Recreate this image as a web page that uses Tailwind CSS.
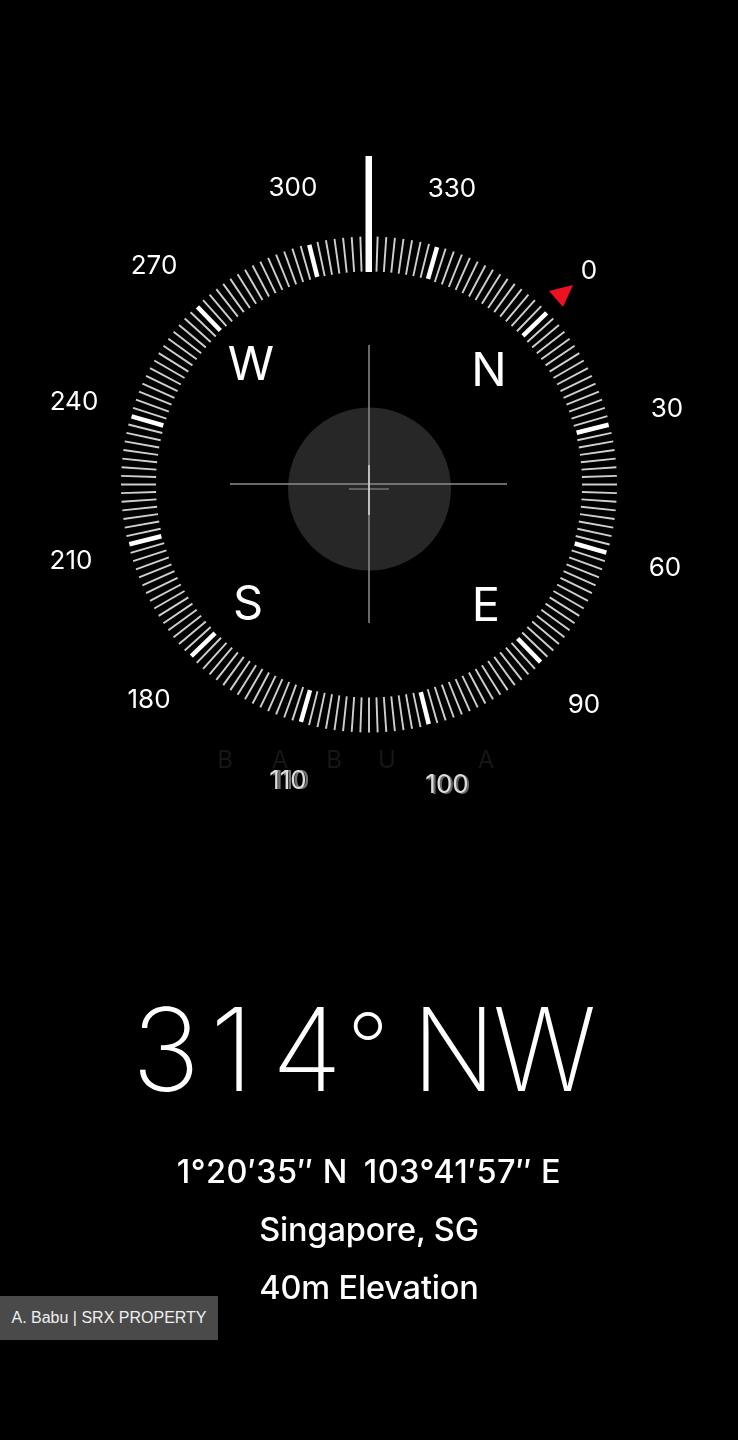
<!DOCTYPE html>
<html lang="en">
<head>
  <meta charset="UTF-8">
  <meta name="viewport" content="width=device-width, initial-scale=1.0">
  <title>Compass</title>
  <script src="https://cdn.jsdelivr.net/npm/@tailwindcss/browser@4"></script>
</head>
<body class="bg-black text-white font-['Inter',sans-serif]">
  <main class="relative w-[738px] h-[1440px] overflow-hidden bg-black">

    <!-- Compass dial -->
    <section class="relative h-[960px] blur-[0.4px]">
      <svg id="dial" class="absolute inset-0" width="738" height="960" viewBox="0 0 738 960">
        <circle cx="369.5" cy="489" r="81.5" fill="#272727"></circle>
        <g id="ticks"></g>
        <rect x="365.5" y="156" width="6.5" height="116" fill="#fff"></rect>
        <line x1="230" y1="484" x2="507" y2="484" stroke="#8c8c8c" stroke-width="1.5"></line>
        <line x1="369" y1="345" x2="369" y2="623" stroke="#8c8c8c" stroke-width="1.5"></line>
        <line x1="349" y1="489" x2="389" y2="489" stroke="#9a9a9a" stroke-width="1.2"></line>
        <line x1="369" y1="465" x2="369" y2="515" stroke="#d8d8d8" stroke-width="1.5"></line>
        <polygon points="549,291 573,285 563,307" fill="#ee1122"></polygon>
      </svg>

      <!-- Degree labels -->
      <span class="absolute left-[293px] top-[187px] -translate-x-1/2 -translate-y-1/2 text-[26px] leading-none">300</span>
      <span class="absolute left-[452px] top-[188px] -translate-x-1/2 -translate-y-1/2 text-[26px] leading-none">330</span>
      <span class="absolute left-[589px] top-[270px] -translate-x-1/2 -translate-y-1/2 text-[26px] leading-none">0</span>
      <span class="absolute left-[667px] top-[408px] -translate-x-1/2 -translate-y-1/2 text-[26px] leading-none">30</span>
      <span class="absolute left-[665px] top-[567px] -translate-x-1/2 -translate-y-1/2 text-[26px] leading-none">60</span>
      <span class="absolute left-[584px] top-[704px] -translate-x-1/2 -translate-y-1/2 text-[26px] leading-none">90</span>
      <span class="absolute left-[149px] top-[699px] -translate-x-1/2 -translate-y-1/2 text-[26px] leading-none">180</span>
      <span class="absolute left-[71px] top-[560px] -translate-x-1/2 -translate-y-1/2 text-[26px] leading-none">210</span>
      <span class="absolute left-[74px] top-[401px] -translate-x-1/2 -translate-y-1/2 text-[26px] leading-none">240</span>
      <span class="absolute left-[154px] top-[265px] -translate-x-1/2 -translate-y-1/2 text-[26px] leading-none">270</span>

      <!-- Ghosted labels at the bottom of the dial -->
      <span class="absolute left-[288px] top-[780px] -translate-x-1/2 -translate-y-1/2 text-[26px] leading-[20px] text-[#dcdcdc] blur-[0.5px] [text-shadow:3px_0_0_rgba(255,255,255,0.45)]">110</span>
      <span class="absolute left-[447px] top-[784px] -translate-x-1/2 -translate-y-1/2 text-[26px] leading-[20px] text-[#dcdcdc] blur-[0.5px] [text-shadow:2px_1px_0_rgba(255,255,255,0.4)]">100</span>

      <!-- Cardinal points -->
      <span class="absolute left-[251px] top-[362px] -translate-x-1/2 -translate-y-1/2 text-[47px] leading-none">W</span>
      <span class="absolute left-[489px] top-[368px] -translate-x-1/2 -translate-y-1/2 text-[47px] leading-none">N</span>
      <span class="absolute left-[248px] top-[601px] -translate-x-1/2 -translate-y-1/2 text-[47px] leading-none">S</span>
      <span class="absolute left-[486px] top-[603px] -translate-x-1/2 -translate-y-1/2 text-[47px] leading-none">E</span>

      <!-- Watermark -->
      <span class="absolute left-[225px] top-[760px] -translate-x-1/2 -translate-y-1/2 text-[24px] leading-[18px] text-[#161616]">B</span>
      <span class="absolute left-[280px] top-[760px] -translate-x-1/2 -translate-y-1/2 text-[24px] leading-[18px] text-[#161616]">A</span>
      <span class="absolute left-[334px] top-[760px] -translate-x-1/2 -translate-y-1/2 text-[24px] leading-[18px] text-[#161616]">B</span>
      <span class="absolute left-[387px] top-[760px] -translate-x-1/2 -translate-y-1/2 text-[24px] leading-[18px] text-[#161616]">U</span>
      <span class="absolute left-[486px] top-[760px] -translate-x-1/2 -translate-y-1/2 text-[24px] leading-[18px] text-[#161616]">A</span>
    </section>

    <!-- Reading -->
    <section class="flex flex-col items-center blur-[0.3px]">
      <h1 class="mt-[25px] pr-[3px] text-[115px] leading-[130px] font-[250] whitespace-nowrap"><span class="tracking-[10px]">3</span><span class="tracking-[18px]">1</span><span class="tracking-[5px]">4</span><span class="inline-block -translate-y-[11px] text-[92px] leading-none font-[200]">°</span><span class="tracking-[-9px]"> </span><span class="inline-block origin-left scale-x-[0.95] tracking-[-3px]">NW</span></h1>
      <div class="mt-[40px] flex flex-col items-center gap-[25px] text-[32.5px] leading-[33px] font-medium whitespace-nowrap">
        <p class="flex gap-[16px] tracking-[0.45px]"><span>1°20′35″ N</span><span>103°41′57″ E</span></p>
        <p class="tracking-[-0.15px]">Singapore, SG</p>
        <p class="tracking-[-0.15px]">40m Elevation</p>
      </div>
    </section>

    <!-- Photo credit -->
    <div class="absolute left-0 top-[1296px] w-[218px] h-[44px] flex items-center justify-center bg-[#4a4a4a] text-[16px] text-[#efefef] font-['Liberation_Sans',sans-serif] whitespace-nowrap">A. Babu | SRX PROPERTY</div>
  </main>

  <script>
    // Dial ticks every 2 degrees, rotated so that the heading sits under the pointer
    const heading = 314, cx = 369, cy = 484.5
    const group = document.getElementById('ticks')
    let markup = ''
    for (let deg = 0; deg < 360; deg += 2) {
      const rad = (deg - heading) * Math.PI / 180
      const major = deg % 30 === 0
      const inner = major ? 214 : 213, outer = major ? 247 : 248
      const x1 = cx + inner * Math.sin(rad), y1 = cy - inner * Math.cos(rad)
      const x2 = cx + outer * Math.sin(rad), y2 = cy - outer * Math.cos(rad)
      markup += `<line x1="${x1}" y1="${y1}" x2="${x2}" y2="${y2}" stroke="${major ? '#fff' : '#cfcfcf'}" stroke-width="${major ? 4.5 : 1.9}"></line>`
    }
    group.innerHTML = markup
  </script>
</body>
</html>
